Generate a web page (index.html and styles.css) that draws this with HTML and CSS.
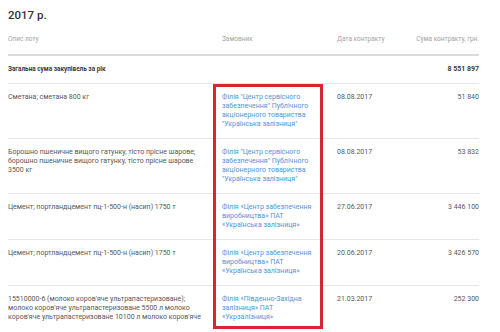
FILE: index.html
```html
<!DOCTYPE html>
<html lang="uk">
<head>
<meta charset="utf-8">
<title>2017 р.</title>
<link rel="stylesheet" href="styles.css">
</head>
<body>
<div class="page">
  <h2 class="year">2017 р.</h2>
  <div class="table">
    <div class="row head">
      <div class="c1">Опис лоту</div>
      <div class="c2">Замовник</div>
      <div class="c3">Дата контракту</div>
      <div class="c4">Сума контракту, грн.</div>
    </div>
    <div class="row total">
      <div class="c1 total-label">Загальна сума закупівель за рік</div>
      <div class="c2"></div>
      <div class="c3"></div>
      <div class="c4">8 551 897</div>
    </div>
    <div class="row">
      <div class="c1">Сметана; сметана 800 кг</div>
      <div class="c2"><a class="link">Філія "Центр сервісного<br>забезпечення" Публічного<br>акціонерного товариства<br>"Українська залізниця"</a></div>
      <div class="c3">08.08.2017</div>
      <div class="c4">51 840</div>
    </div>
    <div class="row">
      <div class="c1">Борошно пшеничне вищого гатунку, тісто прісне шарове;<br>борошно пшеничне вищого гатунку, тісто прісне шарове<br>3500 кг</div>
      <div class="c2"><a class="link">Філія "Центр сервісного<br>забезпечення" Публічного<br>акціонерного товариства<br>"Українська залізниця"</a></div>
      <div class="c3">08.08.2017</div>
      <div class="c4">53 832</div>
    </div>
    <div class="row">
      <div class="c1">Цемент; портландцемент пц-1-500-н (насип) 1750 т</div>
      <div class="c2"><a class="link">Філія «Центр забезпечення<br>виробництва» ПАТ<br>«Українська залізниця»</a></div>
      <div class="c3">27.06.2017</div>
      <div class="c4">3 446 100</div>
    </div>
    <div class="row">
      <div class="c1">Цемент; портландцемент пц-1-500-н (насип) 1750 т</div>
      <div class="c2"><a class="link">Філія «Центр забезпечення<br>виробництва» ПАТ<br>«Українська залізниця»</a></div>
      <div class="c3">20.06.2017</div>
      <div class="c4">3 426 570</div>
    </div>
    <div class="row last">
      <div class="c1">15510000-6 (молоко коров'яче ультрапастеризоване);<br>молоко коров'яче ультрапастеризоване 5500 л молоко<br>коров'яче ультрапастеризоване 10100 л молоко коров'яче</div>
      <div class="c2"><a class="link">Філія «Південно-Західна<br>залізниця» ПАТ<br>«Укрзалізниця»</a></div>
      <div class="c3">21.03.2017</div>
      <div class="c4">252 300</div>
    </div>
    <div class="highlight"></div>
  </div>
</div>
</body>
</html>
```

FILE: styles.css
```css
html, body {
  margin: 0;
  padding: 0;
  background: #ffffff;
}
body {
  font-family: Roboto, "Liberation Sans", Arial, sans-serif;
  color: #585858;
  overflow: hidden;
}
.page {
  width: 471px;
  padding: 8px 0 0 8px;
}
.year {
  margin: 0;
  font-size: 11.5px;
  line-height: 14px;
  font-weight: 500;
  color: #333333;
}
.table {
  position: relative;
}
.row {
  display: grid;
  grid-template-columns: 205px 110px 80px 76px;
  font-size: 7px;
  line-height: 9px;
  border-bottom: 1px solid #e6e6e6;
}
.row > div {
  padding: 9px 0;
}
.row .c2 {
  padding-left: 9px;
}
.row .c3 {
  padding-left: 14px;
}
.row .c4 {
  text-align: right;
}
.head {
  color: #a3a3a3;
  font-size: 6.5px;
  border-bottom: 2px solid #dcdcdc;
}
.head > div {
  padding: 13px 0 10px;
}
.total {
  font-weight: 700;
  color: #3a3a3a;
}
.row .total-label {
  font-size: 6.4px;
}
.last {
  border-bottom: none;
}
.link {
  color: #4f95d8;
  text-decoration: none;
}
.highlight {
  position: absolute;
  left: 205px;
  top: 62px;
  width: 104px;
  height: 239px;
  border: 3px solid #d7262f;
  pointer-events: none;
}
```
